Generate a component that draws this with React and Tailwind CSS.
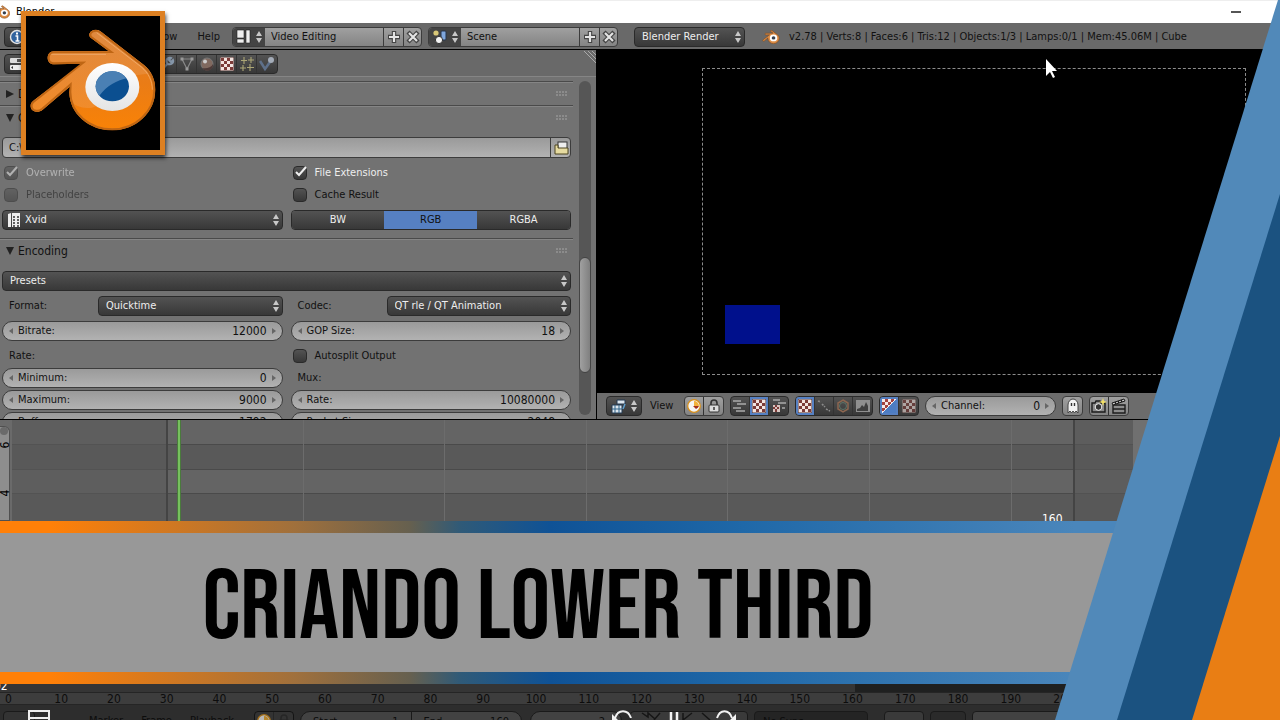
import React, { useState } from "react";

const TICKS = [0, 10, 20, 30, 40, 50, 60, 70, 80, 90, 100, 110, 120, 130, 140, 150, 160, 170, 180, 190, 200];

const GRID_LINES = [
  "left-[303px]",
  "left-[444px]",
  "left-[586px]",
  "left-[727px]",
  "left-[869px]",
  "left-[1011px]",
];

const DARK = "border border-[#2a2a2a] bg-linear-to-b from-[#535353] to-[#383838] text-[#eee]";
const LIGHT = "border border-[#3c3c3c] bg-linear-to-b from-[#9a9a9a] to-[#b2b2b2] text-[#111]";
const GREY = "border border-[#3c3c3c] bg-linear-to-b from-[#a0a0a0] to-[#848484] text-[#111]";

function BlenderMark({ className }) {
  return (
    <svg viewBox="84 80 390 318" className={className} aria-hidden="true">
      <path
        d="M288 88C298 88 303 94 308 98L432 194C456 214 466 240 466 268C466 336 408 390 337 390C266 390 210 340 210 275L211 258L128 328C116 338 98 336 93 324C89 314 94 306 102 300L246 190L162 192C150 192 143 184 143 173C143 162 150 153 162 153L326 152L272 112C262 102 272 88 288 88Z"
        fill="#dd8d46"
        stroke="#7c4a20"
        strokeWidth="14"
      />
      <ellipse cx="337" cy="260" rx="84" ry="76" fill="#fff" />
      <ellipse cx="337" cy="260" rx="42" ry="38" fill="#35404f" />
    </svg>
  );
}

function BlenderLogo() {
  return (
    <svg viewBox="78 48 402 400" className="h-full w-full" role="img" aria-label="Blender">
      <defs>
        <linearGradient id="body" x1="0" y1="0" x2="0" y2="1">
          <stop offset="0" stopColor="#d97f33" />
          <stop offset="0.5" stopColor="#ea7c16" />
          <stop offset="1" stopColor="#ff8500" />
        </linearGradient>
        <linearGradient id="shine" x1="0" y1="0" x2="0" y2="1">
          <stop offset="0" stopColor="#df9354" />
          <stop offset="1" stopColor="#f39a45" />
        </linearGradient>
        <linearGradient id="ring" x1="0" y1="0" x2="0" y2="1">
          <stop offset="0" stopColor="#ffffff" />
          <stop offset="1" stopColor="#e4e4e4" />
        </linearGradient>
        <clipPath id="shape">
          <path d="M288 88C298 88 303 94 308 98L432 194C456 214 466 240 466 268C466 336 408 390 337 390C266 390 208 340 208 275L211 258L128 328C116 338 98 336 93 324C89 314 94 306 102 300L246 190L162 192C150 192 143 184 143 173C143 162 150 153 162 153L326 152L272 112C262 102 272 88 288 88Z" />
        </clipPath>
        <clipPath id="pupil">
          <ellipse cx="337" cy="258" rx="50" ry="45" />
        </clipPath>
      </defs>
      <g clipPath="url(#shape)">
        <rect x="78" y="48" width="402" height="400" fill="url(#body)" />
        <path d="M78 48H480V222C400 214 350 240 320 290C290 335 240 330 205 300L78 400Z" fill="url(#shine)" opacity="0.5" />
      </g>
      <path
        d="M288 91C296 91 301 96 306 100L430 197C453 216 463 242 463 268C463 334 406 387 337 387C268 387 211 338 211 275L212 252L126 326C116 334 100 333 96 323C92 314 97 307 104 302L250 187L162 189C152 189 146 182 146 173C146 163 152 156 162 156L334 155L274 110C266 103 274 91 288 91Z"
        fill="none"
        stroke="#bf6614"
        strokeWidth="6"
      />
      <path d="M290 97L424 200C446 218 457 243 457 268" fill="none" stroke="#f6bd86" strokeWidth="3" opacity="0.6" />
      <path d="M154 162H318" fill="none" stroke="#f3b986" strokeWidth="3" opacity="0.6" />
      <ellipse cx="337" cy="260" rx="81" ry="72" fill="url(#ring)" />
      <ellipse cx="337" cy="258" rx="50" ry="45" fill="#0b4f90" />
      <path d="M280 200H395L384 232C350 240 320 256 298 286L280 290Z" fill="#4a80b4" clipPath="url(#pupil)" />
    </svg>
  );
}

function UpDown({ className = "" }) {
  return (
    <svg viewBox="0 0 6 14" className={`pointer-events-none h-3.5 w-1.5 ${className}`} aria-hidden="true">
      <path d="M3 1L6 6H0ZM3 13L0 8H6Z" fill="#c8c8c8" />
    </svg>
  );
}

function Plus() {
  return (
    <svg viewBox="0 0 14 14" className="size-3.5" aria-hidden="true">
      <path d="M7 1V13M1 7H13" stroke="#444" strokeWidth="4.4" />
      <path d="M7 2V12M2 7H12" stroke="#e4e4e4" strokeWidth="2.2" />
    </svg>
  );
}

function Cross() {
  return (
    <svg viewBox="0 0 14 14" className="size-3.5" aria-hidden="true">
      <path d="M2 2L12 12M12 2L2 12" stroke="#444" strokeWidth="4.4" />
      <path d="M3 3L11 11M11 3L3 11" stroke="#e4e4e4" strokeWidth="2.2" />
    </svg>
  );
}

function Checker({ dim }) {
  return (
    <svg viewBox="0 0 14 14" className={`size-3.5 ${dim ? "opacity-60" : ""}`} aria-hidden="true">
      <rect width="14" height="14" fill="#f3e4e0" stroke="#4a2a28" />
      <path
        d="M1 1h3v3h-3zM7 1h3v3h-3zM4 4h3v3h-3zM10 4h3v3h-3zM1 7h3v3h-3zM7 7h3v3h-3zM4 10h3v3h-3zM10 10h3v3h-3z"
        fill="#7d3b38"
      />
    </svg>
  );
}

// Small toolbar glyphs that no icon set carries
const GLYPHS = {
  info: (
    <>
      <circle cx="8" cy="8" r="6.5" fill="#31639f" stroke="#e4e4e4" strokeWidth="1.4" />
      <path d="M6.5 7H8.5V12M6.5 12H10.5" stroke="#fff" strokeWidth="1.6" fill="none" />
      <rect x="7" y="3.5" width="2" height="2" fill="#fff" />
    </>
  ),
  layout: (
    <path d="M1 1H8V9H1ZM1 10H8V14H1ZM10 1H14V14H10Z" fill="#eee" stroke="#222" strokeWidth="0.6" />
  ),
  scene: (
    <>
      <circle cx="4" cy="4" r="2.6" fill="#d9c877" />
      <rect x="9" y="2" width="5" height="9" rx="1" fill="#7fa6dc" stroke="#24344d" />
      <circle cx="7" cy="11" r="3.6" fill="#f4f4f4" stroke="#333" />
    </>
  ),
  sliders: (
    <>
      <rect x="1" y="2" width="14" height="5" rx="1" fill="#ddd" />
      <rect x="8" y="3" width="6" height="3" fill="#555" />
      <rect x="1" y="9" width="14" height="5" rx="1" fill="#eee" />
      <path d="M4 10L2 11.5L4 13M12 10L14 11.5L12 13" fill="#333" />
    </>
  ),
  wrench: (
    <path d="M3 14L9 7M8 7C6 3 10 1 12 2L10 4L12 6L14 4C15 7 12 9 9 8" fill="none" stroke="#8495a8" strokeWidth="2" />
  ),
  mesh: (
    <>
      <path d="M3 3H13L8 13Z" fill="none" stroke="#888" strokeWidth="1.2" />
      <path d="M1.500 1.500h3v3h-3zM11.500 1.500h3v3h-3zM6.500 11.500h3v3h-3z" fill="#999" />
    </>
  ),
  material: (
    <>
      <circle cx="8" cy="8" r="6" fill="#80695f" stroke="#777" />
      <path d="M3 12A6 6 0 0 0 14 8C12 12 7 13 3 12Z" fill="#4d3a38" />
      <circle cx="6" cy="5.500" r="2" fill="#ccc" />
    </>
  ),
  particles: (
    <path
      d="M5 1V8M2 4.500H8M12 1V7M9 4H15M4 9V15M1 12H7M11 8V15M8 11.500H15"
      stroke="#aca676"
      strokeWidth="1.100"
    />
  ),
  physics: (
    <>
      <path d="M1 5L6 13L11 6" fill="none" stroke="#5e708a" strokeWidth="2.600" />
      <circle cx="12" cy="4" r="3" fill="#a4acb8" />
    </>
  ),
  film: (
    <>
      <path d="M2 2L5 1V15H2ZM6 1H14V15H6Z" fill="#eee" />
      <path d="M8 4V15M12 4V15" stroke="#333" strokeWidth="1.500" strokeDasharray="2 1" />
    </>
  ),
  folder: (
    <>
      <rect x="5" y="2" width="9" height="7" fill="#eee" stroke="#333" />
      <path d="M2 5H5V8H15V14H2Z" fill="#e6dba0" stroke="#4d4420" />
    </>
  ),
  sequence: (
    <>
      <path d="M1 7H11V15H1ZM6 2H14V6H6Z" fill="#dce6ee" stroke="#243a52" />
      <path d="M1 11H11M4 7V15M8 7V15" stroke="#2f6288" />
      <path d="M14 6L12 11" stroke="#5ea0d0" strokeWidth="1.500" />
    </>
  ),
  display: (
    <>
      <circle cx="8" cy="8" r="6.300" fill="#f6f6f6" stroke="#d8901c" strokeWidth="1.300" />
      <path d="M8 3V8H13A5 5 0 0 0 8 3Z" fill="#f2b23c" />
      <path d="M7 8H13A6 6 0 0 1 10 11Z" fill="#a4301c" />
    </>
  ),
  lock: (
    <>
      <path d="M5 7V5A3 3 0 0 1 11 5V7" fill="none" stroke="#333" strokeWidth="1.600" />
      <rect x="3" y="7" width="10" height="7" rx="1" fill="#ddd" stroke="#333" />
      <path d="M8 9V12" stroke="#333" strokeWidth="1.500" />
    </>
  ),
  strips: <path d="M1 3H9M5 6H14M1 10H9M4 13H13" stroke="#aaa" strokeWidth="1.600" />,
  stripsPreview: (
    <>
      <path d="M2 2H9M7 5H15" stroke="#aaa" strokeWidth="1.500" />
      <path d="M2 7H9V14H2Z" fill="#d9c5c0" />
      <path d="M4 7h2v2h-2zM2 9h2v2h-2zM6 9h2v2h-2zM4 11h2v3h-2z" fill="#7d3b38" />
      <path d="M11 10H14" stroke="#aaa" strokeWidth="1.500" />
    </>
  ),
  waveform: (
    <path d="M2 3L5 4M6 6L9 9M10 11L14 13" stroke="#8a8a8a" strokeWidth="1.600" strokeDasharray="2 1" />
  ),
  vector: (
    <>
      <path d="M8 2L13 5V11L8 14L3 11V5Z" fill="none" stroke="#8c6650" strokeWidth="1.500" />
      <circle cx="8" cy="8" r="3.500" fill="none" stroke="#5c7468" />
    </>
  ),
  histogram: (
    <>
      <rect x="1" y="2" width="14" height="12" fill="#8f8f8f" />
      <path d="M2 13V11L5 10L7 7L9 9L11 4L13 8V13Z" fill="#3f3f3f" />
    </>
  ),
  alpha: (
    <>
      <rect x="1" y="1" width="14" height="14" fill="#4d7dc4" />
      <path d="M1 1H15L1 15Z" fill="#f5eaea" />
      <path d="M4 1h3v3h-3zM10 1h3v3h-3zM1 4h3v3h-3zM7 4h3v3h-3zM4 7h3v3h-3zM1 10h3v3h-3z" fill="#a3413f" />
      <path d="M15 1L1 15" stroke="#eee" />
    </>
  ),
  ghost: (
    <>
      <path d="M3 15V7A5 6 0 0 1 13 7V15L11 13L9.500 15L8 13L6.500 15L5 13Z" fill="#f2f2f2" stroke="#444" />
      <path d="M6.500 5V8M9.500 5V8" stroke="#333" strokeWidth="1.400" />
    </>
  ),
  camera: (
    <>
      <path d="M1 5H4L5 3H9L10 5H14V14H1Z" fill="#8c8c8c" stroke="#1c1c1c" strokeWidth="1.4" />
      <circle cx="7.500" cy="9" r="3.300" fill="#333" stroke="#eee" />
      <path d="M12 0L13 3L16 4L13 5L12 8L11 5L8 4L11 3Z" fill="#f4e169" />
    </>
  ),
  clapper: (
    <>
      <path d="M2 7H14V15H2Z" fill="#8c8c8c" stroke="#1c1c1c" strokeWidth="1.4" />
      <path d="M1 5L13 1L14 3L2 7Z" fill="#ccc" stroke="#1c1c1c" />
      <path d="M4 4L5 6M7 3L8 5M10 2L11 4M2 11H14" stroke="#1c1c1c" strokeWidth="1.600" />
    </>
  ),
};

function Glyph({ name }) {
  return (
    <svg viewBox="0 0 16 16" className="size-4 shrink-0" aria-hidden="true">
      {GLYPHS[name]}
    </svg>
  );
}

function EditorButton({ glyph, label }) {
  return (
    <button aria-label={label} className={`flex h-5 items-center gap-1 rounded px-1 ${DARK}`}>
      <Glyph name={glyph} />
      <UpDown />
    </button>
  );
}

function DataBlock({ glyph, label, value }) {
  const [name, setName] = useState(value);
  return (
    <div className={`flex h-5 w-[190px] items-stretch overflow-hidden rounded ${GREY}`}>
      <button aria-label={`Browse ${label}`} className="flex w-8 items-center justify-center gap-1 bg-[#444]">
        <Glyph name={glyph} />
        <UpDown />
      </button>
      <input
        aria-label={label}
        value={name}
        onChange={(e) => setName(e.target.value)}
        className="min-w-0 flex-1 px-1.5 outline-none"
      />
      <button aria-label={`Add ${label}`} className="flex w-5 items-center justify-center border-l border-[#3c3c3c]">
        <Plus />
      </button>
      <button aria-label={`Remove ${label}`} className="flex w-[18px] items-center justify-center border-l border-[#3c3c3c]">
        <Cross />
      </button>
    </div>
  );
}

function Select({ id, label, options, glyph, className = "" }) {
  return (
    <div className={`grid h-5 items-center ${className}`}>
      <select
        id={id}
        aria-label={label}
        className={`col-start-1 row-start-1 h-5 w-full appearance-none rounded outline-none ${
          glyph ? "pl-[22px]" : "pl-[7px]"
        } ${DARK}`}
      >
        {options.map((option) => (
          <option key={option}>{option}</option>
        ))}
      </select>
      {glyph && (
        <span className="pointer-events-none col-start-1 row-start-1 pl-1">
          <Glyph name={glyph} />
        </span>
      )}
      <UpDown className="col-start-1 row-start-1 mr-1 justify-self-end" />
    </div>
  );
}

function Check({ label, checked = false, disabled = false, className = "" }) {
  const [on, setOn] = useState(checked);
  return (
    <label
      className={`flex items-center gap-2 ${disabled ? "opacity-50" : ""} ${on ? "text-[#eee]" : "text-[#111]"} ${className}`}
    >
      <span className="grid size-3.5">
        <input
          type="checkbox"
          checked={on}
          disabled={disabled}
          onChange={(e) => setOn(e.target.checked)}
          className={`col-start-1 row-start-1 size-3.5 appearance-none rounded ${DARK}`}
        />
        {on && (
          <svg viewBox="0 0 14 14" className="pointer-events-none col-start-1 row-start-1 size-3.5" aria-hidden="true">
            <path d="M3 6L6 9L13 1" fill="none" stroke="#f0f0f0" strokeWidth="2" />
          </svg>
        )}
      </span>
      {label}
    </label>
  );
}

function Arrow({ flip }) {
  return (
    <svg viewBox="0 0 4 6" className="h-1.5 w-1" aria-hidden="true">
      <path d={flip ? "M0 0L4 3L0 6Z" : "M4 0L0 3L4 6Z"} fill="#666" />
    </svg>
  );
}

function NumberField({ id, label, value, className = "" }) {
  const [number, setNumber] = useState(value);
  return (
    <div className={`flex h-5 items-center rounded-full px-1.5 ${LIGHT} ${className}`}>
      <button aria-label={`Decrease ${label}`}>
        <Arrow />
      </button>
      <label htmlFor={id} className="pl-[5px]">
        {label}:
      </label>
      <input
        id={id}
        value={number}
        onChange={(e) => setNumber(e.target.value)}
        className="min-w-0 flex-1 pr-[5px] text-right text-[12px] outline-none"
      />
      <button aria-label={`Increase ${label}`}>
        <Arrow flip />
      </button>
    </div>
  );
}

function PanelHeader({ title, open }) {
  return (
    <div className="flex h-6 items-center border-t border-[#4a4a4a] pr-1.5 shadow-[inset_0_1px_0_#858585]">
      <button aria-expanded={open} className="flex flex-1 items-center gap-1 pl-1.5 text-[12px] text-[#111]">
        <svg viewBox="0 0 8 8" className="size-2" aria-hidden="true">
          <path d={open ? "M0 0H8L4 8Z" : "M0 0L8 4L0 8Z"} fill="#222" />
        </svg>
        {title}
      </button>
      <svg viewBox="0 0 11 6" className="h-1.5 w-[11px]" aria-hidden="true">
        <path d="M0 1H11M0 4H11" stroke="#a5a5a5" strokeDasharray="2 1" />
      </svg>
    </div>
  );
}

function ColorModes() {
  const [mode, setMode] = useState("RGB");
  return (
    <div className="grid h-5 grid-cols-3 overflow-hidden rounded border border-[#2a2a2a]">
      {["BW", "RGB", "RGBA"].map((item) => (
        <button
          key={item}
          aria-pressed={mode === item}
          onClick={() => setMode(item)}
          className={
            mode === item
              ? "bg-[#5680c2] text-[#111]"
              : "bg-linear-to-b from-[#535353] to-[#383838] text-[#eee]"
          }
        >
          {item}
        </button>
      ))}
    </div>
  );
}

function IconGroup({ items, tone = DARK, cell = "w-[19px]" }) {
  return (
    <div className={`flex h-5 divide-x divide-[#333] overflow-hidden rounded ${tone}`}>
      {items.map(({ glyph, label, active, dim }) => (
        <button
          key={label}
          aria-label={label}
          className={`flex items-center justify-center ${cell} ${active ? "bg-[#5680c2]" : ""}`}
        >
          {glyph === "checker" ? <Checker dim={dim} /> : <Glyph name={glyph} />}
        </button>
      ))}
    </div>
  );
}

function InfoBar() {
  return (
    <header className="flex h-[27px] shrink-0 items-center border-b border-black bg-[#696969] pt-px text-[#111]">
      <div className="flex w-[220px] items-center justify-between pl-1">
        <EditorButton glyph="info" label="Editor type" />
        <nav className="flex gap-5">
          <button>Window</button>
          <button>Help</button>
        </nav>
      </div>
      <div className="flex gap-1.5 pl-3">
        <DataBlock glyph="layout" label="Screen layout" value="Video Editing" />
        <DataBlock glyph="scene" label="Scene" value="Scene" />
      </div>
      <Select label="Render engine" options={["Blender Render", "Cycles Render"]} className="ml-4 w-[111px]" />
      <BlenderMark className="ml-4 h-3.5 w-5 shrink-0" />
      <p className="ml-2 whitespace-nowrap">
        v2.78 | Verts:8 | Faces:6 | Tris:12 | Objects:1/3 | Lamps:0/1 | Mem:45.06M | Cube
      </p>
    </header>
  );
}

function Properties() {
  return (
    <section className="flex w-[597px] shrink-0 flex-col overflow-hidden border-r border-black bg-[#727272]">
      <div className="flex h-[27px] shrink-0 items-center border-b border-[#858585] bg-[#696969] pt-px pl-1">
        <EditorButton glyph="sliders" label="Properties editor" />
        <div className="ml-[116px]">
          <IconGroup
            cell="w-5"
            items={[
              { glyph: "wrench", label: "Modifiers" },
              { glyph: "mesh", label: "Data" },
              { glyph: "material", label: "Material" },
              { glyph: "checker", label: "Texture" },
              { glyph: "particles", label: "Particles" },
              { glyph: "physics", label: "Physics" },
            ]}
          />
        </div>
        <svg viewBox="0 0 12 12" className="ml-auto size-3 self-start" aria-hidden="true">
          <path d="M0 0L12 12M4 0L12 8M8 0L12 4" stroke="#aaa" />
        </svg>
      </div>

      <div className="flex min-h-0 flex-1">
        <div className="min-w-0 flex-1 overflow-hidden pt-1">
          <PanelHeader title="Dimensions" />
          <PanelHeader title="Output" open />
          <div className="px-0.5 pt-2 pb-2">
            <div className={`flex h-[21px] overflow-hidden rounded ${LIGHT}`}>
              <input
                aria-label="Output path"
                defaultValue="C:\Users\Public\Videos\Aulas\c:"
                className="min-w-0 flex-1 px-1.5 outline-none"
              />
              <button aria-label="Open folder" className="flex w-5 items-center justify-center border-l border-[#3c3c3c]">
                <Glyph name="folder" />
              </button>
            </div>
            <div className="grid grid-cols-2 gap-x-2 pt-1">
              <Check label="Overwrite" checked disabled className="h-[22px] pl-0.5" />
              <Check label="File Extensions" checked className="h-[22px] pl-0.5" />
              <Check label="Placeholders" disabled className="h-[22px] pl-0.5" />
              <Check label="Cache Result" className="h-[22px] pl-0.5" />
            </div>
            <div className="grid grid-cols-2 gap-x-2 pt-1">
              <Select label="File format" options={["Xvid", "H.264"]} glyph="film" />
              <ColorModes />
            </div>
          </div>

          <PanelHeader title="Encoding" open />
          <div className="px-0.5 pt-[9px]">
            <Select label="Presets" options={["Presets"]} />
            <div className="grid grid-cols-2 gap-x-2 gap-y-[5px] pt-[5px]">
              <div className="flex items-center">
                <label htmlFor="format" className="w-24 pl-[7px] text-[#111]">
                  Format:
                </label>
                <Select id="format" options={["Quicktime", "AVI"]} className="flex-1" />
              </div>
              <div className="flex items-center">
                <label htmlFor="codec" className="w-24 pl-[7px] text-[#111]">
                  Codec:
                </label>
                <Select id="codec" options={["QT rle / QT Animation", "None"]} className="flex-1" />
              </div>
              <NumberField id="bitrate" label="Bitrate" value="12000" />
              <NumberField id="gop" label="GOP Size" value="18" />
              <p className="flex h-5 items-center pl-[7px] text-[#111]">Rate:</p>
              <Check label="Autosplit Output" className="h-5 pl-0.5" />
            </div>
            <div className="grid grid-cols-2 gap-x-2 gap-y-0.5 pt-0.5">
              <NumberField id="minimum" label="Minimum" value="0" />
              <p className="flex h-5 items-center pl-[7px] text-[#111]">Mux:</p>
              <NumberField id="maximum" label="Maximum" value="9000" />
              <NumberField id="mux-rate" label="Rate" value="10080000" />
              <NumberField id="buffer" label="Buffer" value="1792" />
              <NumberField id="packet" label="Packet Size" value="2048" />
            </div>
          </div>
        </div>
        <div className="flex w-[23px] justify-center pt-1 pb-1">
          <div className="flex w-3 flex-col rounded-full bg-[#565656] pt-[176px] pb-[42px]">
            <div className="flex-1 rounded-full border border-[#444] bg-linear-to-r from-[#a0a0a0] to-[#808080]" />
          </div>
        </div>
      </div>
    </section>
  );
}

function Preview() {
  return (
    <section className="flex min-w-0 flex-1 flex-col">
      <div className="flex flex-1 bg-black pt-[18px] pr-[34px] pb-[18px] pl-[105px]">
        <div className="relative flex-1 border border-dashed border-[#8c8c8c]">
          <div className="absolute bottom-[30px] left-[22px] h-[39px] w-[55px] bg-[#00108c]" />
          <svg viewBox="0 0 12 20" className="absolute -top-2.5 left-[342px] h-5 w-3" aria-hidden="true">
            <path d="M1 0V17L5 13L8 19L10 18L7 12H12Z" fill="#fff" />
          </svg>
        </div>
      </div>
      <div className="flex h-[26px] shrink-0 items-center bg-[#6c6c6c] pl-[9px] text-[#111]">
        <div className="flex w-[78px] items-center gap-2">
          <EditorButton glyph="sequence" label="Sequence editor" />
          <button>View</button>
        </div>
        <div className="flex gap-1.5">
          <IconGroup
            tone={GREY}
            items={[
              { glyph: "display", label: "Display" },
              { glyph: "lock", label: "Lock" },
            ]}
          />
          <IconGroup
            items={[
              { glyph: "strips", label: "Sequencer" },
              { glyph: "checker", label: "Image preview", active: true },
              { glyph: "stripsPreview", label: "Sequencer and preview" },
            ]}
          />
          <IconGroup
            items={[
              { glyph: "checker", label: "Image", active: true },
              { glyph: "waveform", label: "Waveform" },
              { glyph: "vector", label: "Vectorscope" },
              { glyph: "histogram", label: "Histogram" },
            ]}
          />
          <IconGroup
            items={[
              { glyph: "alpha", label: "Color and alpha", active: true },
              { glyph: "checker", label: "Color", dim: true },
            ]}
          />
          <NumberField id="channel" label="Channel" value="0" className="w-[131px]" />
          <IconGroup tone={GREY} items={[{ glyph: "ghost", label: "Ghost" }]} />
          <IconGroup
            tone={GREY}
            items={[
              { glyph: "camera", label: "Render image" },
              { glyph: "clapper", label: "Render animation" },
            ]}
          />
        </div>
      </div>
    </section>
  );
}

function Sequencer() {
  return (
    <section className="relative h-[102px] shrink-0 overflow-hidden border-t border-black bg-[#5a5a5a]">
      <div className="h-6 bg-[#646464]" />
      <div className="h-[25px] border-t border-[#4a4a4a] bg-[#595959]" />
      <div className="h-6 border-t border-[#4a4a4a] bg-[#646464]" />
      <div className="h-7 border-t border-[#4a4a4a] bg-[#595959]" />
      {GRID_LINES.map((line) => (
        <div key={line} className={`absolute inset-y-0 w-px bg-[#6c6c6c] ${line}`} />
      ))}
      <div className="absolute inset-y-0 left-0 w-[168px] border-r-2 border-[#444] bg-[#5a5a5a]/60" />
      <div className="absolute inset-y-0 left-[177px] w-1 border-x border-[#4a7a3c] bg-[#76c05e]" />
      <div className="absolute inset-y-0 right-0 left-[1073px] border-l-2 border-[#444] bg-[#585858]/60" />
      <div className="absolute inset-y-0 right-0 left-[1133px] bg-[#707070]" />
      <div className="absolute inset-y-0 left-0 w-3 bg-[#6a6a6a] pt-1.5">
        <div className="h-full w-2.5 rounded-tr-md border border-l-0 border-[#505050] bg-[#8e8e8e]">
          <div className="size-2 rounded-full bg-[#6a6a6a]" />
        </div>
      </div>
      <span className="absolute top-[19px] -left-px flex size-3 -rotate-90 items-center justify-center text-[12px] text-black">
        6
      </span>
      <span className="absolute top-[67px] -left-px flex size-3 -rotate-90 items-center justify-center text-[12px] text-black">
        4
      </span>
      <span className="absolute -bottom-1.5 left-[1042px] text-[12px] text-white">160</span>
    </section>
  );
}

function Banner() {
  const stripe =
    "h-3 bg-[linear-gradient(to_right,#ff8008_4%,#a0703c_23%,#66604f_32%,#2f5a78_36%,#0f5296_43%,#1f68a8_58%,#4a86bb_84%)]";
  return (
    <section className="shrink-0 bg-[#989898]">
      <div className={stripe} />
      <h1 className="flex h-[139px] items-center justify-center pt-3 pr-[204px] font-['Bebas_Neue','Liberation_Sans_Narrow',sans-serif] text-[99px] leading-none font-normal whitespace-nowrap text-black">
        CRIANDO LOWER THIRD
      </h1>
      <div className={stripe} />
    </section>
  );
}

function Timeline() {
  return (
    <footer className="relative flex min-h-0 flex-1 flex-col overflow-hidden bg-[#2d2d2d] text-[#0c0c0c]">
      <div className="flex h-2 shrink-0 bg-[#1f2020]">
        <div className="w-[855px] bg-[#353535]" />
      </div>
      <div className="flex h-[13px] shrink-0 items-center border-y border-[#252525] bg-[#3d3d3d]">
        <div className="-ml-[18px] grid w-[1108px] shrink-0 grid-cols-[repeat(21,1fr)] text-center text-[12px] leading-3">
          {TICKS.map((tick) => (
            <span key={tick}>{tick}</span>
          ))}
        </div>
      </div>
      <div className="flex items-start pt-1.5 pl-[3px] leading-5 whitespace-nowrap">
        <div className="h-5 w-8 shrink-0 rounded border border-[#1a1a1a] bg-[#333]" />
        <div className="flex w-[219px] shrink-0 gap-[18px] pl-[54px]">
          <button>Marker</button>
          <button>Frame</button>
          <button>Playback</button>
        </div>
        <IconGroup
          tone="shrink-0 border border-[#1a1a1a] bg-[#444] brightness-75"
          items={[
            { glyph: "display", label: "Preview range" },
            { glyph: "lock", label: "Lock range" },
          ]}
        />
        <div className="ml-1.5 flex h-5 w-[222px] shrink-0 divide-x divide-[#1a1a1a] rounded-full border border-[#1a1a1a] bg-[#424242]">
          <div className="flex flex-1 justify-between px-3">
            <span>Start:</span>
            <span>1</span>
          </div>
          <div className="flex flex-1 justify-between px-3">
            <span>End:</span>
            <span>160</span>
          </div>
        </div>
        <div className="ml-2 h-5 w-[92px] shrink-0 rounded-full border border-[#1a1a1a] bg-[#424242] pr-4 text-right">
          2
        </div>
        <div className="ml-2 h-5 w-[118px] shrink-0 rounded border border-[#1a1a1a] bg-[#3a3a3a]" />
        <div className="ml-1.5 h-5 w-[114px] shrink-0 rounded border border-[#1a1a1a] bg-[#242424] pl-2">No Sync</div>
        <div className="ml-4 h-5 w-10 shrink-0 rounded border border-[#1a1a1a] bg-[#3a3a3a]" />
        <div className="ml-1.5 h-5 w-9 shrink-0 rounded border border-[#1a1a1a] bg-[#2a2a2a]" />
        <div className="ml-1.5 h-5 w-28 shrink-0 rounded border border-[#1a1a1a] bg-[#424242]" />
      </div>
      <span className="absolute -top-1 -left-1.5 text-[12px] leading-3 text-white">02</span>
      <svg viewBox="0 0 22 10" className="absolute bottom-0 left-7 h-2.5 w-[22px]" aria-hidden="true">
        <path d="M1 10V1H21V10M1 8H21" fill="none" stroke="#eee" strokeWidth="2" />
      </svg>
      <svg viewBox="0 0 130 10" className="absolute bottom-0 left-[610px] h-2.5 w-[130px]" aria-hidden="true">
        <path d="M32 3L38 7V3L45 9M50 3L44 10M82 3L73 10V3M92 3L100 10" fill="none" stroke="#161616" strokeWidth="1.500" />
        <path d="M5 8C8 -1 18 -1 21 8M107 8C110 -1 119 -1 122 8" fill="none" stroke="#f2f2f2" strokeWidth="2" />
        <path d="M2 4V10H8ZM126 4V10H120Z" fill="#f2f2f2" />
        <path d="M61 2V10M67 2V10" stroke="#f2f2f2" strokeWidth="2.5" />
      </svg>
    </footer>
  );
}

export default function App() {
  return (
    <main className="relative flex h-screen flex-col overflow-hidden bg-black font-['DejaVu_Sans_Condensed','Open_Sans',sans-serif] text-[11px] leading-4">
      <div className="flex h-[23px] shrink-0 items-center border-t border-[#eee] bg-white pr-[39px] text-black">
        <BlenderMark className="mr-1.5 -ml-1.5 h-3.5 w-4 shrink-0" />
        <span>Blender</span>
        <button aria-label="Minimize" className="ml-auto flex h-full w-2.5 items-center">
          <span className="h-0.5 w-full bg-[#555]" />
        </button>
      </div>
      <InfoBar />
      <div className="flex h-[369px] shrink-0">
        <Properties />
        <Preview />
      </div>
      <Sequencer />
      <Banner />
      <Timeline />

      {/* Diagonal stripes over the right edge */}
      <svg viewBox="0 0 225 720" className="absolute top-0 right-0 h-full w-[225px]" preserveAspectRatio="none" aria-hidden="true">
        <path d="M223 0H225V720H0Z" fill="#5189b9" />
        <path d="M225 194V720H62Z" fill="#1b5280" />
        <path d="M225 436V720H137Z" fill="#e97e14" />
      </svg>

      <div className="absolute top-[11px] left-[21px] h-36 w-36 border-[5px] border-[#dd8022] bg-black shadow-[1px_3px_4px_rgba(0,0,0,0.7)]">
        <BlenderLogo />
      </div>
    </main>
  );
}
